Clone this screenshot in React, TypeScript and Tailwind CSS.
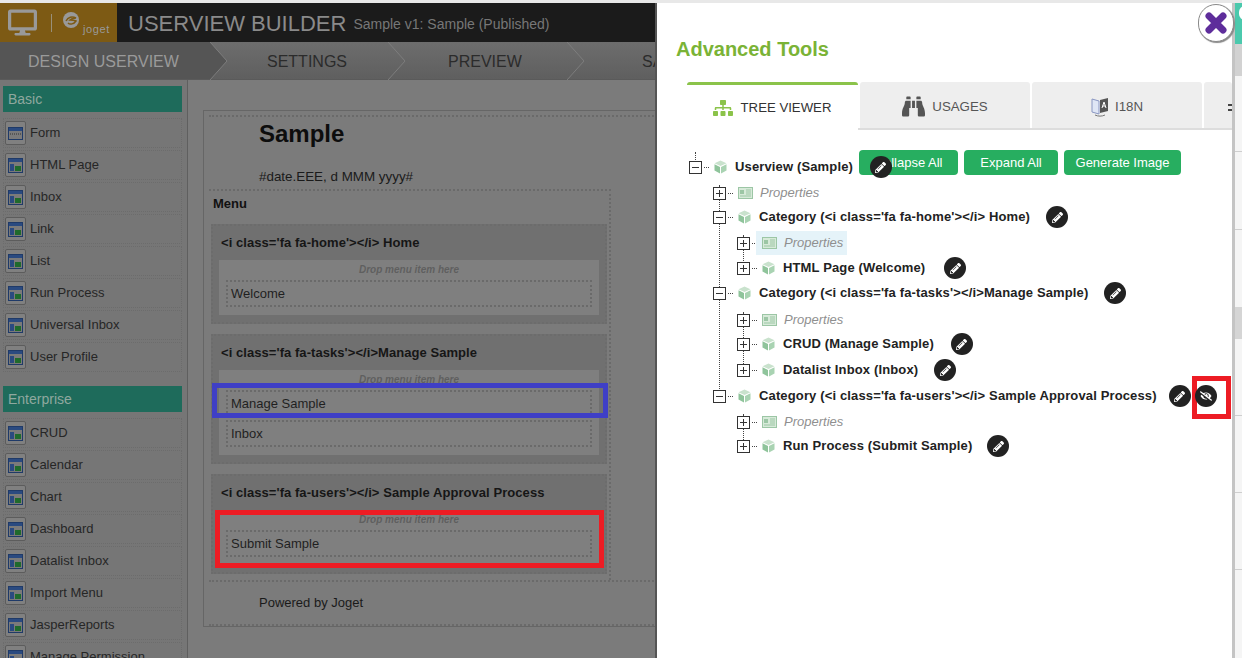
import { FaBinoculars, FaDesktop, FaEyeSlash, FaPencilAlt, FaSitemap } from 'react-icons/fa';

const basicItems = ['Form', 'HTML Page', 'Inbox', 'Link', 'List', 'Run Process', 'Universal Inbox', 'User Profile'];
const enterpriseItems = ['CRUD', 'Calendar', 'Chart', 'Dashboard', 'Datalist Inbox', 'Import Menu', 'JasperReports', 'Manage Permission'];

function ItemIcon({ form }: { form?: boolean }) {
    return (
        <div className="flex items-center justify-center w-[21px] h-[24px] shrink-0 border border-[#5c5c5c] bg-[#808080] rounded-[2px]">
            {form ? (
                <svg width="15" height="13" viewBox="0 0 15 13">
                    <rect x="0.5" y="0.5" width="14" height="12" fill="#7a7a7a" stroke="#1f3a68" />
                    <rect x="1" y="1" width="13" height="3" fill="#2a4a80" />
                    <line x1="2" y1="7" x2="13" y2="7" stroke="#333" strokeDasharray="1 1" />
                </svg>
            ) : (
                <svg width="15" height="15" viewBox="0 0 15 15">
                    <rect x="0.5" y="0.5" width="14" height="14" fill="#7a7a7a" stroke="#1f3a68" />
                    <rect x="1" y="1" width="13" height="3" fill="#2a4a80" />
                    <rect x="2" y="6" width="4" height="7" fill="#2a4a80" />
                    <rect x="7" y="8" width="6" height="5" fill="#1f6a2c" />
                </svg>
            )}
        </div>
    );
}

function SideItem({ label, form }: { label: string; form?: boolean }) {
    return (
        <div className="flex items-center gap-[4px] h-[30px] mb-[2px] pl-px border border-dotted border-[#6c6c6c] text-[13px] text-[#262626] whitespace-nowrap">
            <ItemIcon form={form} />
            <span>{label}</span>
        </div>
    );
}

function SideHeader({ label }: { label: string }) {
    return <div className="flex items-center h-[26px] pl-[5px] mb-[6px] bg-[#1e6b5b] text-[14px] text-[#8fa89f]">{label}</div>;
}

function NavStep({ label, width, pad, active }: { label: string; width: string; pad: string; active?: boolean }) {
    return (
        <div className={`relative flex items-center shrink-0 h-full pt-[3px] text-[16px] whitespace-nowrap ${width} ${pad} ${active ? 'bg-[#555555] text-[#9a9a9a]' : 'text-[#2b2b2b]'}`}>
            {label}
            <svg className="absolute top-0 left-full z-10" width="18" height="38" viewBox="0 0 18 38">
                {active && <polygon points="0,0 17,19 0,38" fill="#555555" />}
                <polyline points="0,0 17,19 0,38" fill="none" stroke="#7d7d7d" />
            </svg>
        </div>
    );
}

function MenuItem({ label }: { label: string }) {
    return <div className="flex items-center h-[27px] pl-[3px] border-2 border-dotted border-[#6a6a6a] text-[13px] text-[#1f1f1f]">{label}</div>;
}

function MenuCategory({ title, items, height, mb }: { title: string; items: string[]; height: string; mb: string }) {
    return (
        <div className={`flex flex-col px-[6px] border-2 border-dotted border-[#6c6c6c] bg-[#707070] ${height} ${mb}`}>
            <div className="flex items-center h-[34px] pl-[2px] text-[13px] tracking-[0.06px] font-bold text-[#161616]">{title}</div>
            <div className="flex flex-col flex-1 mb-[7px] px-[7px] bg-[#7f7f7f]">
                <div className="flex justify-center items-center h-[19px] text-[10px] font-bold italic text-[#5f5f5f]">Drop menu item here</div>
                <div className="flex flex-col gap-[3px] pt-px">
                    {items.map((item) => (
                        <MenuItem key={item} label={item} />
                    ))}
                </div>
            </div>
        </div>
    );
}

function CubeIcon() {
    return (
        <svg className="shrink-0" width="13" height="14" viewBox="0 0 13 14">
            <polygon points="6.500,0.500 12.500,3.300 6.500,6 0.500,3.300" fill="#c9e2cd" />
            <polygon points="0.500,4.300 6,6.900 6,13.500 0.500,10.600" fill="#8fc49b" />
            <polygon points="12.500,4.300 7,6.900 7,13.500 12.500,10.600" fill="#a9d3b2" />
        </svg>
    );
}

function PropsIcon() {
    return (
        <svg className="shrink-0" width="15" height="12" viewBox="0 0 15 12">
            <rect x="0.5" y="0.5" width="14" height="11" fill="#d7ead9" stroke="#9cc6a5" />
            <rect x="2" y="3" width="4" height="4" fill="#9cc6a5" />
            <path d="M8 3h5M8 5h5M8 7h5M2 9h11" stroke="#9cc6a5" />
        </svg>
    );
}

function EditButton({ className = '' }: { className?: string }) {
    return (
        <span className={`relative z-10 flex items-center justify-center w-[22px] h-[22px] shrink-0 rounded-full bg-[#222222] text-white ${className}`}>
            <FaPencilAlt size={11} />
        </span>
    );
}

function Toggle({ open }: { open?: boolean }) {
    return (
        <span className="relative shrink-0 w-[13px] h-[13px] border border-[#333333] bg-white">
            <span className="absolute left-[2px] right-[2px] top-[5px] h-px bg-[#333333]" />
            {!open && <span className="absolute top-[2px] bottom-[2px] left-[5px] w-px bg-[#333333]" />}
        </span>
    );
}

interface RowProps {
    label: string;
    indent: string;
    open?: boolean;
    props?: boolean;
    selected?: boolean;
    gap?: string;
    editGap?: string;
    children?: React.ReactNode;
}

function TreeRow({ label, indent, open, props, selected, gap = '', editGap = 'ml-[16px]', children }: RowProps) {
    return (
        <div className={`relative flex items-center h-[24px] whitespace-nowrap ${indent} ${gap}`}>
            <Toggle open={open} />
            <span className="ml-[2px] mr-[5px] w-[5px] border-t border-dotted border-[#444444]" />
            {props ? (
                <span className={`flex items-center h-[24px] -ml-[6px] pl-[6px] pr-[4px] ${selected ? 'bg-[#e5f3f9]' : ''}`}>
                    <PropsIcon />
                    <span className="ml-[7px] text-[13px] italic text-[#8f8f8f]">Properties</span>
                </span>
            ) : (
                <>
                    <CubeIcon />
                    <span className="ml-[8px] text-[13px] font-bold tracking-[0.14px] text-[#222222]">{label}</span>
                </>
            )}
            {!props && !children && <EditButton className={editGap} />}
            {children}
        </div>
    );
}

export default function App() {
    return (
        <div className="relative flex flex-col w-[1242px] h-[658px] overflow-hidden bg-white font-['Liberation_Sans',Arial,sans-serif]">
            <div className="h-[3px] shrink-0 bg-[#e8e8e8]" />
            <div className="flex flex-1 min-h-0">
                {/* Dimmed builder behind the panel */}
                <div className="flex flex-col w-[655px] shrink-0 overflow-hidden bg-[#7b7b7b]">
                    <div className="flex items-center h-[39px] shrink-0 bg-[#1b1b1b]">
                        <div className="flex items-center w-[117px] h-full shrink-0 pl-[8px] bg-[#7d5a14] text-[#999999]">
                            <FaDesktop size={29} />
                            <span className="ml-[14px] mr-[11px] w-px h-[18px] bg-[#99907a]" />
                            <svg className="-mt-[6px] shrink-0" width="16" height="16" viewBox="0 0 16 16">
                                <circle cx="8" cy="8" r="8" fill="#999999" />
                                <path d="M3 9c2-4 6-5 10-3-3 0-5 1-6 2 2 0 4 0 6 1-2 3-6 4-8 2" fill="none" stroke="#7d5a14" strokeWidth="1.500" />
                            </svg>
                            <span className="self-end ml-[4px] mb-[7px] text-[11px] leading-none tracking-[0.6px]">joget</span>
                        </div>
                        <span className="ml-[11px] mt-[2px] text-[22px] leading-none text-[#8a8a8a] whitespace-nowrap">USERVIEW BUILDER</span>
                        <span className="ml-[7px] mt-[3px] text-[14px] leading-none text-[#777777] whitespace-nowrap">Sample v1: Sample (Published)</span>
                    </div>
                    <div className="flex h-[38px] shrink-0 border-b border-[#5a5a5a] bg-gradient-to-b from-[#6d6d6d] to-[#5f5f5f]">
                        <NavStep label="DESIGN USERVIEW" width="w-[210px]" pad="pl-[28px]" active />
                        <NavStep label="SETTINGS" width="w-[178px]" pad="pl-[57px]" />
                        <NavStep label="PREVIEW" width="w-[179px]" pad="pl-[60px]" />
                        <NavStep label="SAVE" width="w-[100px]" pad="pl-[75px]" />
                    </div>
                    <div className="flex flex-1 min-h-0">
                        <div className="w-[188px] shrink-0 pl-[3px] pr-[5px] pt-[6px] border-r border-[#5f5f5f] bg-[#767676]">
                            <SideHeader label="Basic" />
                            {basicItems.map((item, i) => (
                                <SideItem key={item} label={item} form={i === 0} />
                            ))}
                            <div className="h-[12px]" />
                            <SideHeader label="Enterprise" />
                            {enterpriseItems.map((item) => (
                                <SideItem key={item} label={item} />
                            ))}
                        </div>
                        <div className="flex-1 min-w-0 pl-[15px] pt-[30px]">
                            <div className="w-[460px] h-[517px] border border-[#666666] pl-[5px] pt-[4px] -mr-[20px]">
                                <div className="h-[74px] border-t-2 border-dotted border-[#6a6a6a] pl-[50px]">
                                    <div className="pt-px text-[24px] leading-[32px] font-bold text-[#0d0d0d]">Sample</div>
                                    <div className="pt-[19px] text-[13.4px] leading-[16px] text-[#1a1a1a]">#date.EEE, d MMM yyyy#</div>
                                </div>
                                <div className="h-[391px] w-[402px] border-r-2 border-t-2 border-dotted border-[#6a6a6a]">
                                    <div className="pl-[4px] pt-[3px] h-[33px] text-[13px] font-bold text-[#111111]">Menu</div>
                                    <div className="ml-[2px] mr-[2px]">
                                        <MenuCategory title="<i class='fa fa-home'></i> Home" items={['Welcome']} height="h-[100px]" mb="mb-[10px]" />
                                        <MenuCategory title="<i class='fa fa-tasks'></i>Manage Sample" items={['Manage Sample', 'Inbox']} height="h-[130px]" mb="mb-[10px]" />
                                        <MenuCategory title="<i class='fa fa-users'></i> Sample Approval Process" items={['Submit Sample']} height="h-[100px]" mb="" />
                                    </div>
                                </div>
                                <div className="h-[46px] border-t-2 border-b-2 border-dotted border-[#6a6a6a] pl-[50px] pt-[13px] text-[13px] leading-[16px] text-[#1a1a1a]">Powered by Joget</div>
                            </div>
                        </div>
                    </div>
                </div>

                {/* Advanced tools panel */}
                <div className="flex flex-col w-[580px] shrink-0 overflow-hidden border-l-2 border-[#555555] border-r-[3px] border-r-[#c4c4c4] bg-white">
                    <div className="pl-[19px] pt-[33px] h-[79px] text-[20px] leading-[26px] font-bold text-[#7ab336]">Advanced Tools</div>
                    <div className="flex h-[48px] shrink-0 pl-[30px]">
                        <div className="flex items-center justify-center gap-[8px] w-[171px] h-[48px] shrink-0 pr-px border-t-[3px] border-[#8bc34a] rounded-t-[3px] bg-white text-[13.2px] text-[#333333]">
                            <FaSitemap size={20} className="text-[#8bc34a]" />
                            <span>TREE VIEWER</span>
                        </div>
                        <div className="flex flex-1 gap-[2px] min-w-0 h-[48px] border-b-2 border-[#dddddd]">
                            <div className="flex items-center justify-center gap-[7px] w-[170px] h-[46px] ml-[2px] pt-[4px] shrink-0 rounded-t-[3px] bg-[#eeeeee] text-[13.3px] text-[#555555]">
                                <FaBinoculars size={23} className="-mt-[2px] text-[#555555]" />
                                <span>USAGES</span>
                            </div>
                            <div className="flex items-center justify-center gap-[6px] w-[170px] h-[46px] pt-[4px] shrink-0 rounded-t-[3px] bg-[#eeeeee] text-[13.3px] text-[#555555]">
                                <svg className="-mt-[2px]" width="18" height="21" viewBox="0 0 18 21">
                                    <path d="M1 3l7 2v13l-7-2z" fill="#dfe6f5" stroke="#8a97c2" />
                                    <path d="M9 4l8-2v13l-8 2z" fill="#555555" />
                                    <path d="M11 12l2-6 2 6M11.800 10h2.400" fill="none" stroke="#ffffff" />
                                    <path d="M4 19c3 1.500 7 1.500 10 0" fill="none" stroke="#777777" />
                                </svg>
                                <span>I18N</span>
                            </div>
                            <div className="flex flex-col justify-center gap-[3px] flex-1 h-[46px] pl-[24px] pt-[4px] rounded-t-[3px] bg-[#eeeeee]">
                                <span className="w-[4px] h-[2px] bg-[#444444]" />
                                <span className="w-[4px] h-[2px] bg-[#444444]" />
                            </div>
                        </div>
                    </div>

                    <div className="relative pt-[25px]">
                        {/* tree connector lines */}
                        <span className="absolute left-[38px] top-[22px] h-[8px] border-l border-dotted border-[#444444]" />
                        <span className="absolute left-[62px] top-[55px] h-[206px] border-l border-dotted border-[#444444]" />
                        <span className="absolute left-[86px] top-[105px] h-[30px] border-l border-dotted border-[#444444]" />
                        <span className="absolute left-[86px] top-[182px] h-[60px] border-l border-dotted border-[#444444]" />
                        <span className="absolute left-[86px] top-[284px] h-[30px] border-l border-dotted border-[#444444]" />

                        <TreeRow label="Userview (Sample)" indent="pl-[32px]" open>
                            <EditButton className="ml-[17px]" />
                            <div className="absolute left-[202px] -top-[5px] flex gap-[6px] text-[13px] text-white">
                                <span className="flex items-center justify-center w-[99px] h-[25px] rounded-[4px] bg-[#27ae60]">Collapse All</span>
                                <span className="flex items-center justify-center w-[94px] h-[25px] rounded-[4px] bg-[#27ae60]">Expand All</span>
                                <span className="flex items-center justify-center w-[117px] h-[25px] rounded-[4px] bg-[#27ae60]">Generate Image</span>
                            </div>
                        </TreeRow>
                        <TreeRow label="Properties" indent="pl-[56px]" props gap="mt-[2px]" />
                        <TreeRow label="Category (<i class='fa fa-home'></i> Home)" indent="pl-[56px]" open />
                        <TreeRow label="Properties" indent="pl-[80px]" props selected gap="mt-[2px]" />
                        <TreeRow label="HTML Page (Welcome)" indent="pl-[80px]" gap="mt-px" editGap="ml-[19px]" />
                        <TreeRow label="Category (<i class='fa fa-tasks'></i>Manage Sample)" indent="pl-[56px]" open gap="mt-px" />
                        <TreeRow label="Properties" indent="pl-[80px]" props gap="mt-[3px]" />
                        <TreeRow label="CRUD (Manage Sample)" indent="pl-[80px]" editGap="ml-[17px]" />
                        <TreeRow label="Datalist Inbox (Inbox)" indent="pl-[80px]" gap="mt-[2px]" />
                        <TreeRow label="Category (<i class='fa fa-users'></i> Sample Approval Process)" indent="pl-[56px]" open gap="mt-[2px]">
                            <EditButton className="ml-[12px]" />
                            <span className="relative z-10 flex items-center justify-center w-[22px] h-[22px] ml-[4px] shrink-0 rounded-full bg-[#222222] text-white">
                                <FaEyeSlash size={12} />
                            </span>
                        </TreeRow>
                        <TreeRow label="Properties" indent="pl-[80px]" props gap="mt-[2px]" />
                        <TreeRow label="Run Process (Submit Sample)" indent="pl-[80px]" editGap="ml-[15px]" />
                    </div>
                </div>

                {/* Page behind, right edge */}
                <div className="flex flex-col flex-1 bg-[#f5f5f5]">
                    <div className="relative h-[41px] overflow-hidden bg-[#4bc9ad]">
                        <span className="absolute left-[4px] top-[3px] w-[12px] h-[14px] rounded-full bg-white" />
                    </div>
                    <div className="h-[32px] bg-[#d2d2d2]" />
                    <div className="h-[76px] border-b border-[#cfcfcf]" />
                    <div className="h-[78px] border-b border-[#cfcfcf]" />
                    <div className="h-[77px]" />
                    <div className="h-[32px] bg-[#d5d5d5]" />
                    <div className="h-[77px] border-b border-[#cfcfcf]" />
                    <div className="h-[77px] border-b border-[#cfcfcf]" />
                    <div className="h-[77px] border-b border-[#cfcfcf]" />
                </div>
            </div>

            {/* Annotation frames drawn over the screenshot */}
            <div className="absolute left-[212px] top-[383px] w-[396px] h-[35px] border-[5px] border-[#3f3fc6]" />
            <div className="absolute left-[215px] top-[510px] w-[389px] h-[58px] border-[5px] border-[#ed1c24]" />
            <div className="absolute left-[1192px] top-[376px] w-[39px] h-[43px] border-[5px] border-[#ed1c24]" />

            {/* Close button */}
            <div className="absolute left-[1198px] top-[4px] flex items-center justify-center w-[36px] h-[38px] rounded-full border border-[#8a8a8a] bg-white shadow-[1px_1px_1px_#888888]">
                <svg width="24" height="24" viewBox="0 0 24 24">
                    <path d="M5 5l14 14M19 5L5 19" stroke="#5e2d9b" strokeWidth="7" strokeLinecap="round" />
                </svg>
            </div>
        </div>
    );
}
